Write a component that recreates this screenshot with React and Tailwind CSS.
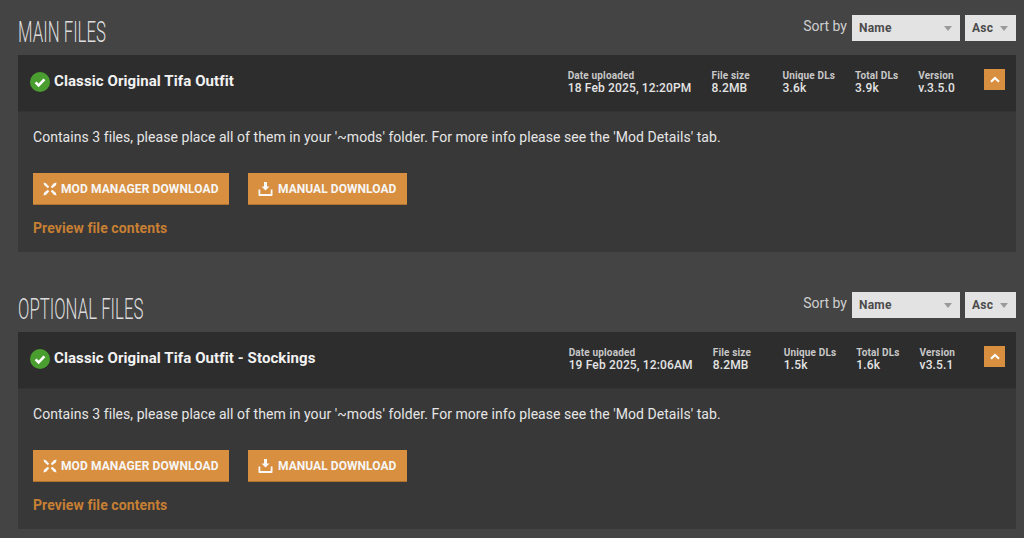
const sections = [
  {
    heading: "MAIN FILES",
    title: "Classic Original Tifa Outfit",
    date: "18 Feb 2025, 12:20PM",
    size: "8.2MB",
    unique: "3.6k",
    total: "3.9k",
    version: "v.3.5.0",
  },
  {
    heading: "OPTIONAL FILES",
    title: "Classic Original Tifa Outfit - Stockings",
    date: "19 Feb 2025, 12:06AM",
    size: "8.2MB",
    unique: "1.5k",
    total: "1.6k",
    version: "v3.5.1",
  },
];

function CheckBadge() {
  return (
    <svg width="20" height="20" viewBox="0 0 20 20" className="shrink-0">
      <circle cx="10" cy="10" r="10" fill="#4a9e2f" />
      <path d="M5.6 10.3l3 3 5.8-6" fill="none" stroke="#fff" strokeWidth="2.6" />
    </svg>
  );
}

function ManagerIcon() {
  return (
    <svg width="14" height="14" viewBox="0 0 14 14" className="shrink-0" fill="#f8f8f8">
      <path d="M0.5 0.5L3 1.2L6.2 4.8L4.8 6.2L1.2 3Z" />
      <path d="M13.5 0.5L13 3.2L9.2 6.3L7.8 4.8L10.8 1.2Z" />
      <path d="M0.5 13.5L1 10.8L4.8 7.7L6.2 9.2L3.2 12.8Z" />
      <path d="M13.5 13.5L10.8 12.8L7.8 9.2L9.2 7.8L12.8 10.8Z" />
    </svg>
  );
}

function DownloadIcon() {
  return (
    <svg width="15" height="14" viewBox="0 0 15 14" className="shrink-0" fill="#f8f8f8">
      <path d="M6 0H9V4.5H11.5L7.5 8.6L3.5 4.5H6Z" />
      <path d="M0.5 7.5H2.3V12H12.7V7.5H14.5V13.2Q14.5 14 13.7 14H1.3Q0.5 14 0.5 13.2Z" />
    </svg>
  );
}

function SelectBox({ label, width }) {
  return (
    <div className={`flex h-[26px] items-center justify-between bg-[#e3e3e3] pr-2 pl-[7px] text-xs font-bold tracking-[0.2px] text-[#4b4b4b] ${width}`}>
      <span>{label}</span>
      <span className="mt-px h-0 w-0 border-x-[4px] border-t-[5px] border-x-transparent border-t-[#9a9a9a]" />
    </div>
  );
}

function Meta({ label, value, className = "" }) {
  return (
    <div className={`flex flex-col text-xs ${className}`}>
      <span className="text-[10px] leading-[13px] font-bold tracking-[0.15px] text-[#c8c8c8]">{label}</span>
      <span className="leading-[12px] font-medium tracking-[0.15px] text-[#e4e4e4]">{value}</span>
    </div>
  );
}

function FileSection({ file }) {
  return (
    <section>
      <div className="flex h-[55px] items-start justify-between">
        <h2 className="mt-[15px] origin-left scale-x-[0.56] text-[30px] leading-[34px] font-light whitespace-nowrap text-[#dcdcdc]">
          {file.heading}
        </h2>
        <div className="mt-[15px] flex items-start">
          <span className="mr-[5px] text-sm leading-[22px] text-[#cfcfcf]">Sort by</span>
          <SelectBox label="Name" width="w-[108px]" />
          <div className="w-[5px]" />
          <SelectBox label="Asc" width="w-[51px]" />
        </div>
      </div>

      <div className="bg-[#383838]">
        <div className="flex h-[57px] items-center justify-between border-b border-[#333] bg-[#2d2d2d] pr-[11px] pl-3">
          <div className="mb-[3px] flex items-center gap-1">
            <CheckBadge />
            <h3 className="text-[15px] font-bold tracking-[0.09px] text-[#f2f2f2]">{file.title}</h3>
          </div>
          <div className="mb-[4px] flex items-center">
            <div className="flex gap-5">
              <Meta label="Date uploaded" value={file.date} />
              <Meta label="File size" value={file.size} className="min-w-[51px]" />
              <Meta label="Unique DLs" value={file.unique} />
              <Meta label="Total DLs" value={file.total} />
              <Meta label="Version" value={file.version} />
            </div>
            <button className="mb-[4px] ml-[29px] flex h-[21px] w-[21px] items-center justify-center bg-[#d98f40]">
              <svg width="10" height="7" viewBox="0 0 10 7" fill="none" stroke="#fff" strokeWidth="2.2">
                <path d="M1 5.8L5 2L9 5.8" />
              </svg>
            </button>
          </div>
        </div>

        <div className="h-[140px] px-[15px] pt-[17px]">
          <p className="text-sm leading-[16px] tracking-[0.053px] text-[#e6e6e6]">
            Contains 3 files, please place all of them in your '~mods' folder. For more info please see the 'Mod Details' tab.
          </p>
          <div className="mt-[28px] flex gap-[19px]">
            <button className="flex h-[32px] w-[196px] items-center gap-[4px] border-b border-[#b0732f] bg-[#d98f40] pl-[10px] text-xs font-bold tracking-[0.1px] text-[#f6f6f6]">
              <ManagerIcon />
              MOD MANAGER DOWNLOAD
            </button>
            <button className="flex h-[32px] w-[159px] items-center gap-[5px] border-b border-[#b0732f] bg-[#d98f40] pl-[10px] text-xs font-bold tracking-[0.05px] text-[#f6f6f6]">
              <DownloadIcon />
              MANUAL DOWNLOAD
            </button>
          </div>
          <a className="mt-[15px] block text-sm leading-[16px] font-bold tracking-[0.1px] text-[#c77f33]">Preview file contents</a>
        </div>
      </div>
    </section>
  );
}

export default function App() {
  return (
    <div className="h-[538px] overflow-hidden bg-[#444444] pl-[18px] font-['Roboto',sans-serif]">
      <div className="flex w-[998px] flex-col gap-[25px]">
        {sections.map((file) => (
          <FileSection key={file.heading} file={file} />
        ))}
      </div>
    </div>
  );
}
